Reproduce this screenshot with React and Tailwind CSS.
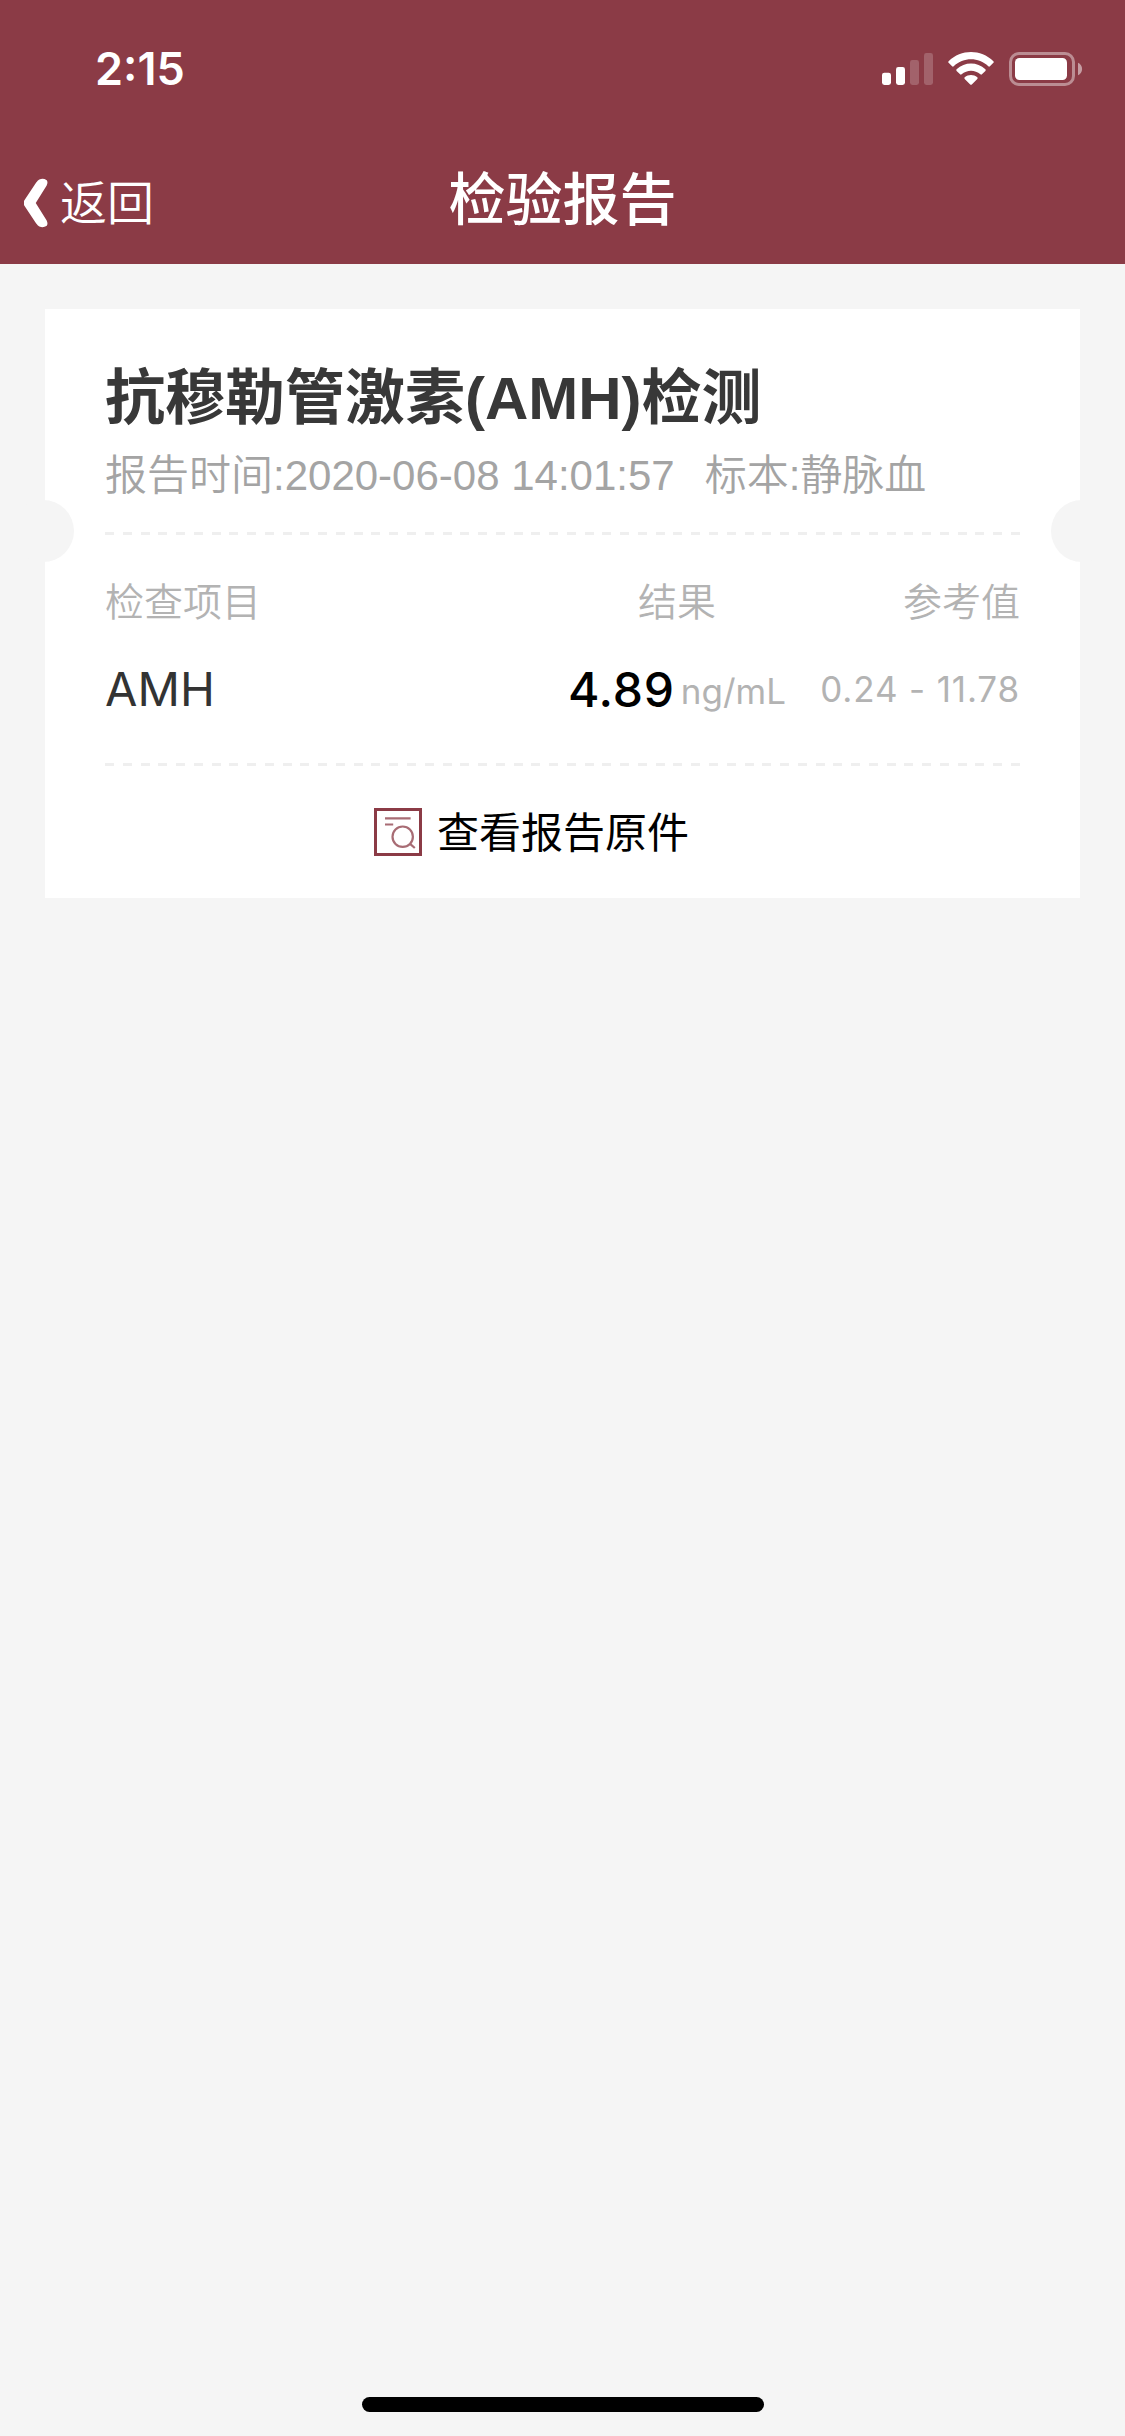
const CJK = "font-['Noto_Sans_CJK_SC',sans-serif]";
const HELV = "font-['Liberation_Sans','Noto_Sans_CJK_SC',sans-serif]";
const INTER = "font-['Inter',sans-serif]";

function StatusIcons() {
  return (
    <svg className="mt-[50px] mr-[41px] h-[38px] w-[202px]" viewBox="0 0 202 38" fill="#fff">
      <rect x="0" y="22.7" width="9" height="12.3" rx="2.4" />
      <rect x="14" y="17" width="9" height="18" rx="2.4" />
      <rect x="28" y="10" width="9" height="25" rx="2.4" opacity="0.2" />
      <rect x="42" y="3" width="9" height="32" rx="2.4" opacity="0.2" />
      <g transform="translate(66 2)">
        <path d="M0.6 9.2C13.2-3.1 32.8-3.1 45.4 9.2C45.9 9.7 45.9 10.3 45.4 10.8L41.9 14.3C41.4 14.8 40.8 14.8 40.3 14.3C30.6 5 15.4 5 5.7 14.3C5.2 14.8 4.6 14.8 4.1 14.3L0.6 10.8C0.1 10.3 0.1 9.7 0.6 9.2Z" />
        <path d="M8.6 17.3C16.8 9.6 29.2 9.6 37.4 17.3C37.9 17.8 37.9 18.4 37.4 18.9L33.9 22.3C33.4 22.8 32.9 22.8 32.4 22.3C27 17.6 19 17.6 13.6 22.3C13.1 22.8 12.6 22.8 12.1 22.3L8.6 18.9C8.1 18.4 8.1 17.8 8.6 17.3Z" />
        <path d="M16.7 25.3C20.3 22.2 25.7 22.2 29.3 25.3C29.8 25.8 29.8 26.4 29.3 26.9L23.8 32.4C23.3 32.9 22.7 32.9 22.2 32.4L16.7 26.9C16.2 26.4 16.2 25.8 16.7 25.3Z" />
      </g>
      <rect x="128.5" y="3.5" width="63" height="31" rx="8.5" fill="none" stroke="#fff" strokeWidth="3" opacity="0.42" />
      <rect x="133" y="8" width="52" height="22" rx="4.5" />
      <path d="M196 12.7V25.3C198.5 24.2 200.1 21.8 200.1 19S198.5 13.8 196 12.7Z" opacity="0.5" />
    </svg>
  );
}

function Divider({ className }) {
  return (
    <div
      className={`h-[3px] shrink-0 bg-[repeating-linear-gradient(to_right,#efefef_0px,#efefef_9px,transparent_9px,transparent_17.765px)] ${className}`}
    />
  );
}

function ReportIcon() {
  return (
    <svg className="mt-[10px] size-[48px]" viewBox="0 0 48 48" fill="none" stroke="#8b3b46">
      <rect x="1.5" y="1.5" width="45" height="45" strokeWidth="3" />
      <g strokeWidth="2.2" opacity="0.75">
        <path d="M11 10.4H36.6M11 16.5H19.2" />
        <circle cx="28.7" cy="28.7" r="10.2" />
        <path d="M35.8 35.6L40.8 40" />
      </g>
    </svg>
  );
}

export default function App() {
  return (
    <div className="flex h-[2436px] w-[1125px] flex-col overflow-hidden bg-[#f5f5f5]">
      <header className="h-[264px] shrink-0 bg-[#8b3b46] text-white">
        <div className="flex h-[132px] items-start justify-between">
          <span className={`${INTER} mt-[41px] ml-[95px] text-[45px] leading-[55px] font-semibold`}>2:15</span>
          <StatusIcons />
        </div>
        <div className="grid h-[132px] grid-cols-[1fr_auto_1fr] items-start">
          <div className="flex items-start">
            <svg className="mt-[46px] ml-[22px] h-[50px] w-[28px]" viewBox="0 0 28 50" fill="#fff" stroke="#fff" strokeWidth="3" strokeLinejoin="round">
              <path d="M18 2.8Q21 1.6 23.6 3.2Q24.4 4.6 23.4 6.6L12 25L23.4 43.4Q24.4 45.4 23.6 46.8Q21 48.4 18 47.2Q16.6 46.4 15.6 44.8L3.5 26.6V23.4L15.6 5.2Q16.6 3.6 18 2.8Z" />
            </svg>
            <span className={`${CJK} mt-[33px] ml-[10px] text-[47px] leading-[69px] font-[350]`}>返回</span>
          </div>
          <h1 className={`${CJK} mt-[22px] text-[57px] leading-[82px] font-medium`}>检验报告</h1>
        </div>
      </header>

      <main className="relative mx-[45px] mt-[45px] flex h-[589px] shrink-0 flex-col bg-white px-[60px] pt-[56px]">
        <span className="absolute top-[191px] left-[-33px] size-[62px] rounded-full bg-[#f5f5f5]" />
        <span className="absolute top-[191px] right-[-33px] size-[62px] rounded-full bg-[#f5f5f5]" />

        <h2 className={`${HELV} text-[60px] leading-[67px] font-bold whitespace-nowrap text-[#383838]`}>
          抗穆勒管激素(AMH)检测
        </h2>
        <div className={`${HELV} mt-[20px] flex text-[42px] leading-[47px] whitespace-nowrap text-[#a4a4a4]`}>
          <span className="mr-[30px] font-[350]">报告时间:2020-06-08 14:01:57</span>
          <span className="font-[350]">标本:静脉血</span>
        </div>

        <Divider className="mt-[33px]" />

        <div className={`${CJK} mt-[36px] grid grid-cols-[462px_220px_1fr] text-[39px] leading-[56px] font-[350] text-[#b3b3b3]`}>
          <span>检查项目</span>
          <span className="text-center">结果</span>
          <span className="text-right">参考值</span>
        </div>

        <div className={`${INTER} mt-[33px] grid h-[57px] grid-cols-[462px_220px_1fr] items-start whitespace-nowrap`}>
          <span className="text-[47px] leading-[57px] text-[#333333]">AMH</span>
          <div className="flex items-start justify-center gap-[6px]">
            <span className="mt-px text-[48px] leading-[57px] font-medium tracking-[0.8px] text-black">4.89</span>
            <span className="mt-[10px] text-[35px] leading-[42px] text-[#b3b3b3]">ng/mL</span>
          </div>
          <span className="mt-[8px] text-right text-[35px] leading-[42px] tracking-[0.85px] text-[#b3b3b3]">0.24 - 11.78</span>
        </div>

        <Divider className="mt-[46px]" />

        <a className="mt-[32px] ml-[269px] flex h-[61px] items-start gap-[15px]">
          <ReportIcon />
          <span className={`${CJK} mt-px text-[42px] leading-[61px] text-black`}>查看报告原件</span>
        </a>
      </main>

      <div className="mx-auto mt-auto mb-[24px] h-[15px] w-[402px] shrink-0 rounded-full bg-black" />
    </div>
  );
}
